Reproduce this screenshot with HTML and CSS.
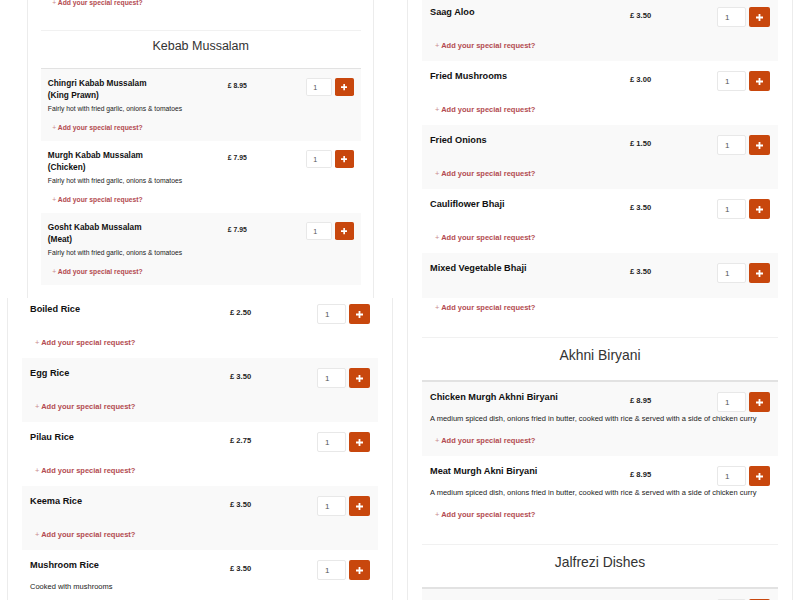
FILE: index.html
```html
<!DOCTYPE html>
<html lang="en">
<head>
  <meta charset="UTF-8">
  <title>Menu</title>
  <link rel="stylesheet" href="styles.css">
</head>
<body>
  <div class="collage">

    <!-- top left -->
    <div class="tile tile-small">
      <div class="panel panel-tl">
        <div class="section section-cont">
          <div class="items">
            <div class="item">
              <div class="item-head">
                <div class="item-name">Shami Kebab</div>
                <div class="item-price">£ 3.95</div>
                <div class="item-add"><input class="qty" type="text" value="1"><button class="add-btn"><svg width="7" height="7" viewBox="0 0 7 7"><path d="M3.5 0v7M0 3.5h7" stroke="#fff" stroke-width="1.8"/></svg></button></div>
              </div>
              <a class="request" href="#"><span class="request-plus">+</span> Add your special request?</a>
            </div>
            <div class="item">
              <div class="item-head">
                <div class="item-name">Seekh Kebab</div>
                <div class="item-price">£ 3.95</div>
                <div class="item-add"><input class="qty" type="text" value="1"><button class="add-btn"><svg width="7" height="7" viewBox="0 0 7 7"><path d="M3.5 0v7M0 3.5h7" stroke="#fff" stroke-width="1.8"/></svg></button></div>
              </div>
              <a class="request" href="#"><span class="request-plus">+</span> Add your special request?</a>
            </div>
          </div>
        </div>
        <div class="section">
          <h3 class="section-title">Kebab Mussalam</h3>
          <div class="items">
            <div class="item">
              <div class="item-head">
                <div class="item-name">Chingri Kabab Mussalam<br>(King Prawn)</div>
                <div class="item-price">£ 8.95</div>
                <div class="item-add"><input class="qty" type="text" value="1"><button class="add-btn"><svg width="7" height="7" viewBox="0 0 7 7"><path d="M3.5 0v7M0 3.5h7" stroke="#fff" stroke-width="1.8"/></svg></button></div>
              </div>
              <p class="item-desc">Fairly hot with fried garlic, onions &amp; tomatoes</p>
              <a class="request" href="#"><span class="request-plus">+</span> Add your special request?</a>
            </div>
            <div class="item">
              <div class="item-head">
                <div class="item-name">Murgh Kabab Mussalam<br>(Chicken)</div>
                <div class="item-price">£ 7.95</div>
                <div class="item-add"><input class="qty" type="text" value="1"><button class="add-btn"><svg width="7" height="7" viewBox="0 0 7 7"><path d="M3.5 0v7M0 3.5h7" stroke="#fff" stroke-width="1.8"/></svg></button></div>
              </div>
              <p class="item-desc">Fairly hot with fried garlic, onions &amp; tomatoes</p>
              <a class="request" href="#"><span class="request-plus">+</span> Add your special request?</a>
            </div>
            <div class="item">
              <div class="item-head">
                <div class="item-name">Gosht Kabab Mussalam<br>(Meat)</div>
                <div class="item-price">£ 7.95</div>
                <div class="item-add"><input class="qty" type="text" value="1"><button class="add-btn"><svg width="7" height="7" viewBox="0 0 7 7"><path d="M3.5 0v7M0 3.5h7" stroke="#fff" stroke-width="1.8"/></svg></button></div>
              </div>
              <p class="item-desc">Fairly hot with fried garlic, onions &amp; tomatoes</p>
              <a class="request" href="#"><span class="request-plus">+</span> Add your special request?</a>
            </div>
          </div>
        </div>
        <div class="section"></div>
      </div>
    </div>

    <!-- top right -->
    <div class="tile">
      <div class="panel panel-tr">
        <div class="section section-cont">
          <div class="items">
            <div class="item">
              <div class="item-head">
                <div class="item-name">Saag Aloo</div>
                <div class="item-price">£ 3.50</div>
                <div class="item-add"><input class="qty" type="text" value="1"><button class="add-btn"><svg width="7" height="7" viewBox="0 0 7 7"><path d="M3.5 0v7M0 3.5h7" stroke="#fff" stroke-width="1.8"/></svg></button></div>
              </div>
              <a class="request" href="#"><span class="request-plus">+</span> Add your special request?</a>
            </div>
            <div class="item">
              <div class="item-head">
                <div class="item-name">Fried Mushrooms</div>
                <div class="item-price">£ 3.00</div>
                <div class="item-add"><input class="qty" type="text" value="1"><button class="add-btn"><svg width="7" height="7" viewBox="0 0 7 7"><path d="M3.5 0v7M0 3.5h7" stroke="#fff" stroke-width="1.8"/></svg></button></div>
              </div>
              <a class="request" href="#"><span class="request-plus">+</span> Add your special request?</a>
            </div>
            <div class="item">
              <div class="item-head">
                <div class="item-name">Fried Onions</div>
                <div class="item-price">£ 1.50</div>
                <div class="item-add"><input class="qty" type="text" value="1"><button class="add-btn"><svg width="7" height="7" viewBox="0 0 7 7"><path d="M3.5 0v7M0 3.5h7" stroke="#fff" stroke-width="1.8"/></svg></button></div>
              </div>
              <a class="request" href="#"><span class="request-plus">+</span> Add your special request?</a>
            </div>
            <div class="item">
              <div class="item-head">
                <div class="item-name">Cauliflower Bhaji</div>
                <div class="item-price">£ 3.50</div>
                <div class="item-add"><input class="qty" type="text" value="1"><button class="add-btn"><svg width="7" height="7" viewBox="0 0 7 7"><path d="M3.5 0v7M0 3.5h7" stroke="#fff" stroke-width="1.8"/></svg></button></div>
              </div>
              <a class="request" href="#"><span class="request-plus">+</span> Add your special request?</a>
            </div>
            <div class="item">
              <div class="item-head">
                <div class="item-name">Mixed Vegetable Bhaji</div>
                <div class="item-price">£ 3.50</div>
                <div class="item-add"><input class="qty" type="text" value="1"><button class="add-btn"><svg width="7" height="7" viewBox="0 0 7 7"><path d="M3.5 0v7M0 3.5h7" stroke="#fff" stroke-width="1.8"/></svg></button></div>
              </div>
              <a class="request" href="#"><span class="request-plus">+</span> Add your special request?</a>
            </div>
          </div>
        </div>
      </div>
    </div>

    <!-- bottom left -->
    <div class="tile">
      <div class="panel panel-bl">
        <div class="section section-cont">
          <div class="items">
            <div class="item">
              <div class="item-head">
                <div class="item-name">Plain Rice</div>
                <div class="item-price">£ 2.50</div>
                <div class="item-add"><input class="qty" type="text" value="1"><button class="add-btn"><svg width="7" height="7" viewBox="0 0 7 7"><path d="M3.5 0v7M0 3.5h7" stroke="#fff" stroke-width="1.8"/></svg></button></div>
              </div>
              <a class="request" href="#"><span class="request-plus">+</span> Add your special request?</a>
            </div>
            <div class="item">
              <div class="item-head">
                <div class="item-name">Boiled Rice</div>
                <div class="item-price">£ 2.50</div>
                <div class="item-add"><input class="qty" type="text" value="1"><button class="add-btn"><svg width="7" height="7" viewBox="0 0 7 7"><path d="M3.5 0v7M0 3.5h7" stroke="#fff" stroke-width="1.8"/></svg></button></div>
              </div>
              <a class="request" href="#"><span class="request-plus">+</span> Add your special request?</a>
            </div>
            <div class="item">
              <div class="item-head">
                <div class="item-name">Egg Rice</div>
                <div class="item-price">£ 3.50</div>
                <div class="item-add"><input class="qty" type="text" value="1"><button class="add-btn"><svg width="7" height="7" viewBox="0 0 7 7"><path d="M3.5 0v7M0 3.5h7" stroke="#fff" stroke-width="1.8"/></svg></button></div>
              </div>
              <a class="request" href="#"><span class="request-plus">+</span> Add your special request?</a>
            </div>
            <div class="item">
              <div class="item-head">
                <div class="item-name">Pilau Rice</div>
                <div class="item-price">£ 2.75</div>
                <div class="item-add"><input class="qty" type="text" value="1"><button class="add-btn"><svg width="7" height="7" viewBox="0 0 7 7"><path d="M3.5 0v7M0 3.5h7" stroke="#fff" stroke-width="1.8"/></svg></button></div>
              </div>
              <a class="request" href="#"><span class="request-plus">+</span> Add your special request?</a>
            </div>
            <div class="item">
              <div class="item-head">
                <div class="item-name">Keema Rice</div>
                <div class="item-price">£ 3.50</div>
                <div class="item-add"><input class="qty" type="text" value="1"><button class="add-btn"><svg width="7" height="7" viewBox="0 0 7 7"><path d="M3.5 0v7M0 3.5h7" stroke="#fff" stroke-width="1.8"/></svg></button></div>
              </div>
              <a class="request" href="#"><span class="request-plus">+</span> Add your special request?</a>
            </div>
            <div class="item">
              <div class="item-head">
                <div class="item-name">Mushroom Rice</div>
                <div class="item-price">£ 3.50</div>
                <div class="item-add"><input class="qty" type="text" value="1"><button class="add-btn"><svg width="7" height="7" viewBox="0 0 7 7"><path d="M3.5 0v7M0 3.5h7" stroke="#fff" stroke-width="1.8"/></svg></button></div>
              </div>
              <p class="item-desc">Cooked with mushrooms</p>
              <a class="request" href="#"><span class="request-plus">+</span> Add your special request?</a>
            </div>
          </div>
        </div>
      </div>
    </div>

    <!-- bottom right -->
    <div class="tile">
      <div class="panel panel-br">
        <div class="section section-cont">
          <div class="items">
            <div class="item">
              <div class="item-head">
                <div class="item-name">Chana Masala</div>
                <div class="item-price">£ 3.50</div>
                <div class="item-add"><input class="qty" type="text" value="1"><button class="add-btn"><svg width="7" height="7" viewBox="0 0 7 7"><path d="M3.5 0v7M0 3.5h7" stroke="#fff" stroke-width="1.8"/></svg></button></div>
              </div>
              <a class="request" href="#"><span class="request-plus">+</span> Add your special request?</a>
            </div>
            <div class="item">
              <div class="item-head">
                <div class="item-name">Tarka Dall</div>
                <div class="item-price">£ 3.50</div>
                <div class="item-add"><input class="qty" type="text" value="1"><button class="add-btn"><svg width="7" height="7" viewBox="0 0 7 7"><path d="M3.5 0v7M0 3.5h7" stroke="#fff" stroke-width="1.8"/></svg></button></div>
              </div>
              <a class="request" href="#"><span class="request-plus">+</span> Add your special request?</a>
            </div>
          </div>
        </div>
        <div class="section">
          <h3 class="section-title">Akhni Biryani</h3>
          <div class="items">
            <div class="item">
              <div class="item-head">
                <div class="item-name">Chicken Murgh Akhni Biryani</div>
                <div class="item-price">£ 8.95</div>
                <div class="item-add"><input class="qty" type="text" value="1"><button class="add-btn"><svg width="7" height="7" viewBox="0 0 7 7"><path d="M3.5 0v7M0 3.5h7" stroke="#fff" stroke-width="1.8"/></svg></button></div>
              </div>
              <p class="item-desc">A medium spiced dish, onions fried in butter, cooked with rice &amp; served with a side of chicken curry</p>
              <a class="request" href="#"><span class="request-plus">+</span> Add your special request?</a>
            </div>
            <div class="item">
              <div class="item-head">
                <div class="item-name">Meat Murgh Akni Biryani</div>
                <div class="item-price">£ 8.95</div>
                <div class="item-add"><input class="qty" type="text" value="1"><button class="add-btn"><svg width="7" height="7" viewBox="0 0 7 7"><path d="M3.5 0v7M0 3.5h7" stroke="#fff" stroke-width="1.8"/></svg></button></div>
              </div>
              <p class="item-desc">A medium spiced dish, onions fried in butter, cooked with rice &amp; served with a side of chicken curry</p>
              <a class="request" href="#"><span class="request-plus">+</span> Add your special request?</a>
            </div>
          </div>
        </div>
        <div class="section">
          <h3 class="section-title">Jalfrezi Dishes</h3>
          <div class="items">
            <div class="item">
              <div class="item-head">
                <div class="item-name">Murgh Jalfrezi (Chicken)</div>
                <div class="item-price">£ 7.95</div>
                <div class="item-add"><input class="qty" type="text" value="1"><button class="add-btn"><svg width="7" height="7" viewBox="0 0 7 7"><path d="M3.5 0v7M0 3.5h7" stroke="#fff" stroke-width="1.8"/></svg></button></div>
              </div>
              <a class="request" href="#"><span class="request-plus">+</span> Add your special request?</a>
            </div>
          </div>
        </div>
      </div>
    </div>

  </div>
</body>
</html>
```

FILE: styles.css
```css
body {
  margin: 0;
  background: #fff;
  font-family: "Liberation Sans", Arial, sans-serif;
  color: #222;
}
.collage {
  display: grid;
  grid-template-columns: 400px 400px;
  grid-template-rows: 298px 302px;
  width: 800px;
  height: 600px;
  overflow: hidden;
}
.tile { overflow: hidden; }

.panel {
  box-sizing: border-box;
  width: 386px;
  margin-left: 7px;
  padding: 0 14px;
  background: #fff;
  border-left: 1px solid #ececec;
  border-right: 1px solid #ececec;
}
/* each tile shows a different stretch of the menu */
.panel-tl { zoom: 0.9; margin-left: 30px; margin-top: -109px; }
.panel-tr { margin-top: -3px; }
.panel-bl { margin-top: -68px; }
.panel-br { margin-top: -103px; }

.section { border-top: 1px solid #f1f1f1; padding-bottom: 14px; }
.section-cont { border-top: none; }
.section-title {
  margin: 0;
  padding: 9px 0 17px;
  text-align: center;
  font-size: 13.9px;
  line-height: 16px;
  font-weight: normal;
  color: #333;
  border-bottom: 2px solid #e2e2e2;
}

.item { padding: 9px 8px 10px; background: #fff; }
.item:nth-child(odd) { background: #f9f9f9; }
.item-head { display: flex; align-items: flex-start; }
.item-name {
  width: 200px;
  font-size: 9.2px;
  line-height: 13.5px;
  font-weight: bold;
  color: #111;
}
.item-price {
  flex: 1;
  margin-top: 4px;
  font-size: 7.6px;
  line-height: 12px;
  font-weight: bold;
  color: #222;
}
.item-add { display: flex; gap: 3px; margin-top: 1px; }
.qty {
  box-sizing: border-box;
  width: 29px;
  height: 20px;
  margin: 0;
  padding: 0 0 0 7px;
  border: 1px solid #e8e8e8;
  border-radius: 2px;
  background: #fff;
  font-family: "Liberation Sans", Arial, sans-serif;
  font-size: 8px;
  color: #555;
}
.add-btn {
  display: flex;
  align-items: center;
  justify-content: center;
  width: 21px;
  height: 20px;
  padding: 0;
  border: none;
  border-radius: 2px;
  background: #c8470d;
  cursor: pointer;
}
.item-desc {
  margin: 2px 0 -2px;
  font-size: 7.5px;
  line-height: 10px;
  color: #222;
}
.request {
  display: block;
  margin: 13px 0 0 5px;
  font-size: 7.5px;
  line-height: 11px;
  font-weight: bold;
  color: #b34b50;
  text-decoration: none;
}
.request-plus { font-weight: normal; color: #c98a8d; }
```
